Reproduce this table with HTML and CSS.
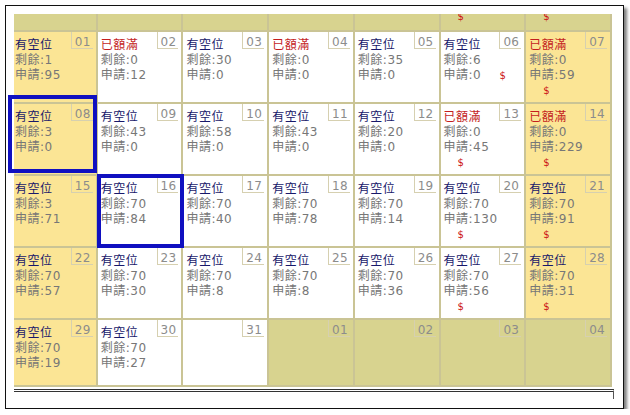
FILE: index.html
```html
<!DOCTYPE html>
<html lang="zh-Hant">
<head>
<meta charset="utf-8">
<title>月曆</title>
<link rel="stylesheet" href="styles.css">
</head>
<body>
<div class="frame">
  <div class="viewport">
    <div class="cal">
      <div class="cell om prev"></div>
      <div class="cell om prev"></div>
      <div class="cell om prev"></div>
      <div class="cell om prev"></div>
      <div class="cell om prev"></div>
      <div class="cell om prev"><span class="fee pfee">$</span></div>
      <div class="cell om prev"><span class="fee pfee">$</span></div>

      <div class="cell we"><span class="day">01</span><div class="body"><div class="st ok">有空位</div><div class="ln">剩餘:1</div><div class="ln">申請:95</div></div></div>
      <div class="cell"><span class="day">02</span><div class="body"><div class="st full">已額滿</div><div class="ln">剩餘:0</div><div class="ln">申請:12</div></div></div>
      <div class="cell"><span class="day">03</span><div class="body"><div class="st ok">有空位</div><div class="ln">剩餘:30</div><div class="ln">申請:0</div></div></div>
      <div class="cell"><span class="day">04</span><div class="body"><div class="st full">已額滿</div><div class="ln">剩餘:0</div><div class="ln">申請:0</div></div></div>
      <div class="cell"><span class="day">05</span><div class="body"><div class="st ok">有空位</div><div class="ln">剩餘:35</div><div class="ln">申請:0</div></div></div>
      <div class="cell"><span class="day">06</span><div class="body"><div class="st ok">有空位</div><div class="ln">剩餘:6</div><div class="ln">申請:0 <span class="fee">$</span></div></div></div>
      <div class="cell we"><span class="day">07</span><div class="body"><div class="st full">已額滿</div><div class="ln">剩餘:0</div><div class="ln">申請:59 <span class="fee">$</span></div></div></div>

      <div class="cell we"><span class="day">08</span><div class="body"><div class="st ok">有空位</div><div class="ln">剩餘:3</div><div class="ln">申請:0</div></div></div>
      <div class="cell"><span class="day">09</span><div class="body"><div class="st ok">有空位</div><div class="ln">剩餘:43</div><div class="ln">申請:0</div></div></div>
      <div class="cell"><span class="day">10</span><div class="body"><div class="st ok">有空位</div><div class="ln">剩餘:58</div><div class="ln">申請:0</div></div></div>
      <div class="cell"><span class="day">11</span><div class="body"><div class="st ok">有空位</div><div class="ln">剩餘:43</div><div class="ln">申請:0</div></div></div>
      <div class="cell"><span class="day">12</span><div class="body"><div class="st ok">有空位</div><div class="ln">剩餘:20</div><div class="ln">申請:0</div></div></div>
      <div class="cell"><span class="day">13</span><div class="body"><div class="st full">已額滿</div><div class="ln">剩餘:0</div><div class="ln">申請:45 <span class="fee">$</span></div></div></div>
      <div class="cell we"><span class="day">14</span><div class="body"><div class="st full">已額滿</div><div class="ln">剩餘:0</div><div class="ln">申請:229 <span class="fee">$</span></div></div></div>

      <div class="cell we"><span class="day">15</span><div class="body"><div class="st ok">有空位</div><div class="ln">剩餘:3</div><div class="ln">申請:71</div></div></div>
      <div class="cell"><span class="day">16</span><div class="body"><div class="st ok">有空位</div><div class="ln">剩餘:70</div><div class="ln">申請:84</div></div></div>
      <div class="cell"><span class="day">17</span><div class="body"><div class="st ok">有空位</div><div class="ln">剩餘:70</div><div class="ln">申請:40</div></div></div>
      <div class="cell"><span class="day">18</span><div class="body"><div class="st ok">有空位</div><div class="ln">剩餘:70</div><div class="ln">申請:78</div></div></div>
      <div class="cell"><span class="day">19</span><div class="body"><div class="st ok">有空位</div><div class="ln">剩餘:70</div><div class="ln">申請:14</div></div></div>
      <div class="cell"><span class="day">20</span><div class="body"><div class="st ok">有空位</div><div class="ln">剩餘:70</div><div class="ln">申請:130 <span class="fee">$</span></div></div></div>
      <div class="cell we"><span class="day">21</span><div class="body"><div class="st ok">有空位</div><div class="ln">剩餘:70</div><div class="ln">申請:91 <span class="fee">$</span></div></div></div>

      <div class="cell we"><span class="day">22</span><div class="body"><div class="st ok">有空位</div><div class="ln">剩餘:70</div><div class="ln">申請:57</div></div></div>
      <div class="cell"><span class="day">23</span><div class="body"><div class="st ok">有空位</div><div class="ln">剩餘:70</div><div class="ln">申請:30</div></div></div>
      <div class="cell"><span class="day">24</span><div class="body"><div class="st ok">有空位</div><div class="ln">剩餘:70</div><div class="ln">申請:8</div></div></div>
      <div class="cell"><span class="day">25</span><div class="body"><div class="st ok">有空位</div><div class="ln">剩餘:70</div><div class="ln">申請:8</div></div></div>
      <div class="cell"><span class="day">26</span><div class="body"><div class="st ok">有空位</div><div class="ln">剩餘:70</div><div class="ln">申請:36</div></div></div>
      <div class="cell"><span class="day">27</span><div class="body"><div class="st ok">有空位</div><div class="ln">剩餘:70</div><div class="ln">申請:56 <span class="fee">$</span></div></div></div>
      <div class="cell we"><span class="day">28</span><div class="body"><div class="st ok">有空位</div><div class="ln">剩餘:70</div><div class="ln">申請:31 <span class="fee">$</span></div></div></div>

      <div class="cell we"><span class="day">29</span><div class="body"><div class="st ok">有空位</div><div class="ln">剩餘:70</div><div class="ln">申請:19</div></div></div>
      <div class="cell"><span class="day">30</span><div class="body"><div class="st ok">有空位</div><div class="ln">剩餘:70</div><div class="ln">申請:27</div></div></div>
      <div class="cell"><span class="day">31</span></div>
      <div class="cell om"><span class="day">01</span></div>
      <div class="cell om"><span class="day">02</span></div>
      <div class="cell om"><span class="day">03</span></div>
      <div class="cell om"><span class="day">04</span></div>
    </div>
  </div>
  <div class="below"></div>
  <div class="mark m1"></div>
  <div class="mark m2"></div>
</div>
</body>
</html>
```

FILE: styles.css
```css
* {
  box-sizing: border-box;
}

body {
  margin: 0;
  background: #fff;
  font-family: "DejaVu Sans", "Noto Sans CJK TC", sans-serif;
}

.frame {
  position: relative;
  margin: 5px 0 0 5px;
  width: 619px;
  height: 404px;
  padding: 8px 0 0 8px;
  border: 1px solid #111;
  background: #fff;
  box-shadow: 3px 3px 3px rgba(0, 0, 0, 0.5);
}

.viewport {
  width: 599px;
  height: 375px;
  overflow: hidden;
}

.cal {
  display: grid;
  grid-template-columns: repeat(7, 1fr);
  grid-template-rows: 16px 70px 70px 70px 70px 65px;
  gap: 2px;
  padding: 2px;
  width: 602px;
  margin: -2px 0 0 -4px;
  background: #cac495;
}

.cell {
  min-width: 0;
  padding: 0 3px;
  background: #fff;
}

.cell.we {
  background: #fbe595;
}

.cell.om {
  background: #d8d38f;
}

.day {
  float: right;
  padding: 4px 2px 0 3px;
  font-size: 12px;
  line-height: 12px;
  letter-spacing: 0.3px;
  color: #8c8c8c;
  border-left: 1px solid #d6d0b0;
  border-bottom: 1px solid #d6d0b0;
}

.body {
  width: 68px;
  padding-top: 6px;
  font-size: 12px;
  line-height: 15px;
  letter-spacing: 0.5px;
}

.st.ok {
  color: #18186a;
}

.st.full {
  color: #c41e1e;
}

.ln {
  color: #777;
}

.fee {
  margin-left: 14px;
  font-size: 10px;
  color: #cc1515;
}

.pfee {
  display: block;
  margin-top: -5px;
  line-height: 15px;
}

.below {
  width: 600px;
  height: 10px;
  border-top: 3px double #333;
  border-right: 1px solid #555;
}

.mark {
  position: absolute;
  border: 4px solid #1010c0;
}

.m1 {
  left: 2px;
  top: 89px;
  width: 89px;
  height: 78px;
}

.m2 {
  left: 91px;
  top: 168px;
  width: 87px;
  height: 74px;
}
```
